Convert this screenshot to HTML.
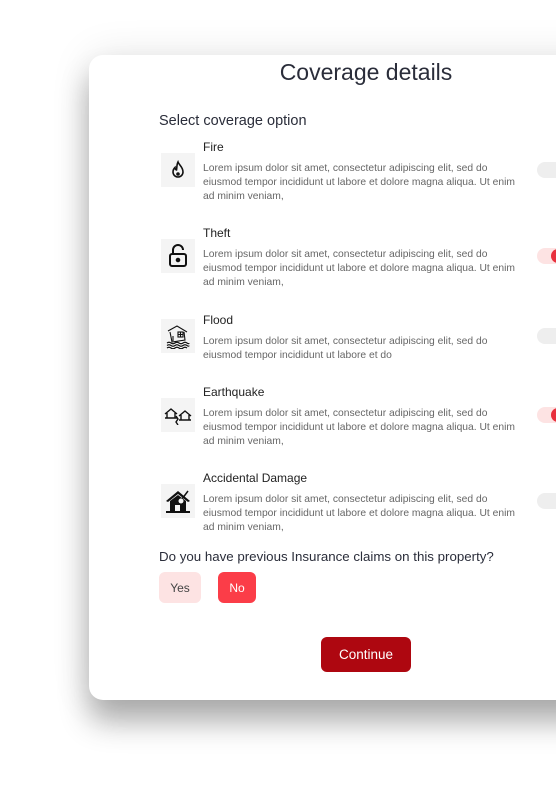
<!DOCTYPE html>
<html><head><style>
*{margin:0;padding:0;box-sizing:border-box}
body{width:556px;height:791px;overflow:hidden;background:#fff;font-family:"Liberation Sans",sans-serif;position:relative;color:#2a2d3a}
.card{position:absolute;left:89px;top:55px;width:520px;height:645px;background:#fff;border-radius:14px;box-shadow:0 22px 30px rgba(0,0,0,0.3),0 0 40px rgba(0,0,0,0.1)}
.abs{position:absolute}
.t{position:absolute;left:203px;font-size:12px;color:#222}
.d{position:absolute;left:203px;font-size:10.3px;line-height:14px;color:#666;white-space:nowrap}
.ic{position:absolute;left:161px;width:34px;height:34px;background:#f4f4f4;display:flex;align-items:center;justify-content:center}
.tg{position:absolute;left:537px;width:30px;height:16px;border-radius:8px;background:#eee}
.tg.on{background:#fde3e3}
.tg.on::after{content:"";position:absolute;left:14px;top:1px;width:14px;height:14px;border-radius:7px;background:#e8303d}
.btn{position:absolute;border-radius:6px;font-size:12px;display:flex;align-items:center;justify-content:center}
</style></head><body>
<div class="card"></div>
<div class="abs" style="left:0;width:556px;top:59px;text-align:center;padding-left:176px;font-size:23px;color:#2a2d3a">Coverage details</div>
<div class="abs" style="left:159px;top:113px;font-size:14.5px;color:#2a2d3a">Select coverage option</div>

<div class="t" style="top:140px">Fire</div>
<div class="ic" style="top:153px"><svg width="20" height="20" viewBox="0 0 20 20" fill="none" stroke="#111" stroke-width="1.6"><path d="M10 2c1 3 5 5 5 10a5 5 0 0 1-10 0c0-2 1-3.5 2-4.5 0 1.5 1 2.5 1.5 2.5C9 8 8.5 5 10 2z"/><circle cx="10" cy="14" r="1" fill="#111"/></svg></div>
<div class="d" style="top:162px">Lorem ipsum dolor sit amet, consectetur adipiscing elit, sed do<br>eiusmod tempor incididunt ut labore et dolore magna aliqua. Ut enim<br>ad minim veniam,</div>
<div class="tg" style="top:162px"></div>

<div class="t" style="top:226px">Theft</div>
<div class="ic" style="top:239px"><svg width="22" height="24" viewBox="0 0 22 24" fill="none" stroke="#111" stroke-width="2"><path d="M6 10V6a5 5 0 0 1 10 0"/><rect x="3" y="10" width="16" height="12" rx="2"/><circle cx="11" cy="16" r="1.3" fill="#111"/></svg></div>
<div class="d" style="top:248px">Lorem ipsum dolor sit amet, consectetur adipiscing elit, sed do<br>eiusmod tempor incididunt ut labore et dolore magna aliqua. Ut enim<br>ad minim veniam,</div>
<div class="tg on" style="top:248px"></div>

<div class="t" style="top:313px">Flood</div>
<div class="ic" style="top:319px"><svg width="26" height="26" viewBox="0 0 26 26" fill="none" stroke="#111" stroke-width="1.1"><path d="M3 8l9-5 10 6M5 9l2 10 13-2-1-8"/><rect x="13" y="9" width="5" height="5"/><path d="M15.5 9v5M13 11.5h5M8 13v5"/><path d="M2 20q2-1.5 4 0t4 0 4 0 4 0 4 0 2 0M2 22.5q2-1.5 4 0t4 0 4 0 4 0 4 0 2 0M2 25q2-1.5 4 0t4 0 4 0 4 0 4 0"/></svg></div>
<div class="d" style="top:335px">Lorem ipsum dolor sit amet, consectetur adipiscing elit, sed do<br>eiusmod tempor incididunt ut labore et do</div>
<div class="tg" style="top:328px"></div>

<div class="t" style="top:385px">Earthquake</div>
<div class="ic" style="top:398px"><svg width="28" height="20" viewBox="0 0 28 20" fill="none" stroke="#111" stroke-width="1.4"><path d="M1 9l6-5 6 5M3 8v5h8V8M1 13h12"/><path d="M15 11l6-5 6 5M17 10v5h8v-5M15 15h12"/><path d="M12 11l2 3-2 3 2 3"/></svg></div>
<div class="d" style="top:407px">Lorem ipsum dolor sit amet, consectetur adipiscing elit, sed do<br>eiusmod tempor incididunt ut labore et dolore magna aliqua. Ut enim<br>ad minim veniam,</div>
<div class="tg on" style="top:407px"></div>

<div class="t" style="top:471px">Accidental Damage</div>
<div class="ic" style="top:484px"><svg width="28" height="28" viewBox="0 0 28 28"><path d="M2 14L14 4l12 10-2 1-10-8-10 8z" fill="#111"/><path d="M6 14l8-6 8 6v10H6z" fill="#111"/><rect x="11" y="18" width="5" height="6" fill="#f4f4f4"/><path d="M2 25h24" stroke="#111" stroke-width="2"/><path d="M18 12l6-8" stroke="#111" stroke-width="1.5"/><circle cx="17" cy="14" r="2.5" fill="#f4f4f4"/></svg></div>
<div class="d" style="top:493px">Lorem ipsum dolor sit amet, consectetur adipiscing elit, sed do<br>eiusmod tempor incididunt ut labore et dolore magna aliqua. Ut enim<br>ad minim veniam,</div>
<div class="tg" style="top:493px"></div>

<div class="abs" style="left:159px;top:549px;font-size:13.3px;color:#2a2d3a">Do you have previous Insurance claims on this property?</div>
<div class="btn" style="left:159px;top:572px;width:42px;height:31px;background:#fde3e3;color:#444">Yes</div>
<div class="btn" style="left:218px;top:572px;width:38px;height:31px;background:#fb3d48;color:#fff">No</div>
<div class="btn" style="left:321px;top:637px;width:90px;height:35px;background:#ae0710;color:#fff;font-size:13.5px">Continue</div>
</body></html>
